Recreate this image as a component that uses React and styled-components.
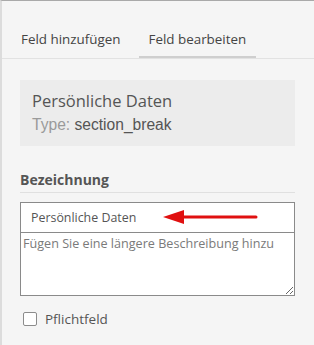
import React from 'react'
import styled, { createGlobalStyle } from 'styled-components'

const Global = createGlobalStyle`
  html, body {
    margin: 0;
    padding: 0;
    background: #f5f5f5;
  }
  body {
    font-family: "Open Sans", "Noto Sans", sans-serif;
  }
`;

const Panel = styled.div`
  width: 314px;
  height: 345px;
  box-sizing: border-box;
  background: #f5f5f5;
  border-top: 1px solid #a9a9a9;
  border-left: 2px solid #dcdcdc;
  overflow: hidden;
`;

const Tabs = styled.div`
  display: flex;
  gap: 8px;
  height: 57px;
  padding-left: 9px;
  border-bottom: 1px solid #e2e2e2;
`;

const Tab = styled.div`
  display: flex;
  align-items: center;
  padding: 20px 10px 0;
  font-size: 13.4px;
  color: #444;
  border-bottom: 2px solid ${p => (p.active ? '#cfcfcf' : 'transparent')};
`;

const Body = styled.div`
  padding: 21px 19px 0 18px;
`;

const Card = styled.div`
  box-sizing: border-box;
  background: #ececec;
  padding: 9px 12px 0;
  height: 66px;
`;

const CardTitle = styled.div`
  font-size: 16.5px;
  color: #555;
  line-height: 24px;
`;

const CardType = styled.div`
  font-family: "Liberation Sans", Arial, sans-serif;
  font-size: 15.6px;
  color: #555;
  line-height: 24px;
  span {
    color: #9a9a9a;
  }
`;

const Label = styled.div`
  margin-top: 24px;
  font-size: 14px;
  font-weight: 700;
  color: #555;
  padding-bottom: 3px;
  border-bottom: 1px solid #e0e0e0;
`;

const Field = styled.div`
  position: relative;
  margin-top: 9px;
  display: flex;
  flex-direction: column;
`;

const Input = styled.input`
  box-sizing: border-box;
  height: 31px;
  margin: 0;
  padding: 0 10px;
  border: 1px solid #8a8a8a;
  background: #fff;
  font-family: "Open Sans", sans-serif;
  font-size: 12.4px;
  color: #555;
  outline: none;
`;

const TextArea = styled.textarea`
  box-sizing: border-box;
  height: 64px;
  margin: 0;
  margin-top: -1px;
  padding: 2px 2px;
  border: 1px solid #8a8a8a;
  background: #fff;
  font-family: "Open Sans", sans-serif;
  font-size: 12.6px;
  color: #555;
  resize: vertical;
  outline: none;
  &::placeholder {
    color: #7a7a7a;
  }
`;

const Arrow = styled.svg`
  position: absolute;
  left: 142px;
  top: 6px;
`;

const Check = styled.label`
  display: flex;
  align-items: center;
  gap: 8px;
  margin-top: 14px;
  padding-left: 3px;
  font-size: 13.5px;
  color: #555;
`;

const Box = styled.span`
  width: 12px;
  height: 12px;
  border: 1px solid #8c8c8c;
  border-radius: 2px;
  background: #fff;
`;

const App = () => {
  return (
    <>
      <Global />
      <Panel>
        <Tabs>
          <Tab>Feld hinzufügen</Tab>
          <Tab active>Feld bearbeiten</Tab>
        </Tabs>
        <Body>
          <Card>
            <CardTitle>Persönliche Daten</CardTitle>
            <CardType><span>Type:</span> section_break</CardType>
          </Card>
          <Label>Bezeichnung</Label>
          <Field>
            <Input defaultValue="Persönliche Daten" />
            <TextArea placeholder="Fügen Sie eine längere Beschreibung hinzu" />
            <Arrow width="96" height="18" viewBox="0 0 96 18">
              <path d="M20 9 L94 9" stroke="#e01010" strokeWidth="3" strokeLinecap="round" />
              <path d="M1 9 L22 2 L22 16 Z" fill="#e01010" />
            </Arrow>
          </Field>
          <Check>
            <Box />
            Pflichtfeld
          </Check>
        </Body>
      </Panel>
    </>
  );
}

export default App
